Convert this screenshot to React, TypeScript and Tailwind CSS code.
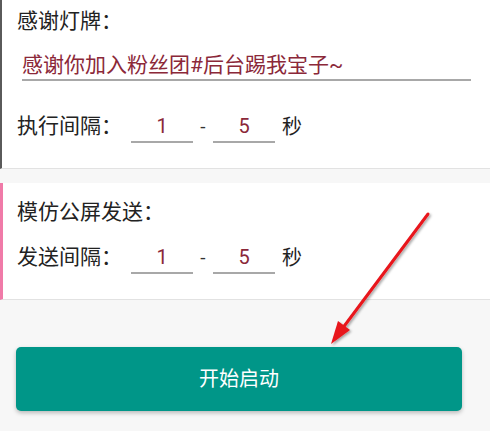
import React from "react";

const font = { fontFamily: 'Roboto, "Noto Sans CJK SC", sans-serif' };

function NumBox({ value }: { value: string }) {
  return (
    <div className="w-[62px] h-[32px] flex items-center justify-center border-b-2 border-[#a8a8a8] text-[20px] text-[#8b2839]">
      {value}
    </div>
  );
}

function IntervalRow({ label, className }: { label: string; className?: string }) {
  return (
    <div className={"flex items-center h-[32px] " + (className ?? "")}>
      <span className="w-[114px] text-[21px] text-[#222]">{label}</span>
      <NumBox value="1" />
      <span className="w-[20px] text-center text-[19px] text-[#333]">-</span>
      <NumBox value="5" />
      <span className="ml-[7px] text-[20px] text-[#222]">秒</span>
    </div>
  );
}

export default function App() {
  return (
    <div className="relative w-[490px] h-[431px] overflow-hidden bg-[#f7f7f7]" style={font}>
      {/* Card 1 */}
      <div className="bg-white border-l-2 border-[#5a5a5a] border-b border-b-[#e2e2e2] h-[169px] pl-[15px]">
        <div className="pt-[6px] h-[36px] leading-[30px] text-[21px] text-[#222]">感谢灯牌：</div>
        <div className="mt-[15px] ml-[5px] mr-[19px] h-[30px] border-b-2 border-[#a8a8a8] leading-[28px] text-[21px] text-[#8b2839]">
          感谢你加入粉丝团#后台踢我宝子~
        </div>
        <IntervalRow label="执行间隔：" className="mt-[30px]" />
      </div>

      {/* Card 2 */}
      <div className="mt-[14px] bg-white border-l-[3px] border-[#f07aa8] border-b border-b-[#e2e2e2] h-[117px] pl-[14px]">
        <div className="pt-[14px] leading-[30px] h-[44px] text-[21px] text-[#222]">模仿公屏发送：</div>
        <IntervalRow label="发送间隔：" className="mt-[15px]" />
      </div>

      {/* Button */}
      <div className="mt-[47px] ml-[16px] w-[446px] h-[64px] rounded-[5px] bg-[#009688] shadow-[0_2px_4px_rgba(0,0,0,0.25)] flex items-center justify-center text-white text-[20px]">
        开始启动
      </div>

      {/* Arrow annotation */}
      <svg className="absolute left-0 top-0 pointer-events-none" width="490" height="431" viewBox="0 0 490 431">
        <defs>
          <filter id="sh" x="-20%" y="-20%" width="140%" height="140%">
            <feDropShadow dx="1.5" dy="1.5" stdDeviation="1" floodColor="#000" floodOpacity="0.35" />
          </filter>
        </defs>
        <g filter="url(#sh)">
          <line x1="428" y1="214" x2="342" y2="329" stroke="#e8141b" strokeWidth="3" strokeLinecap="round" />
          <polygon points="331,344 350,330 338,321" fill="#e8141b" />
        </g>
      </svg>
    </div>
  );
}
